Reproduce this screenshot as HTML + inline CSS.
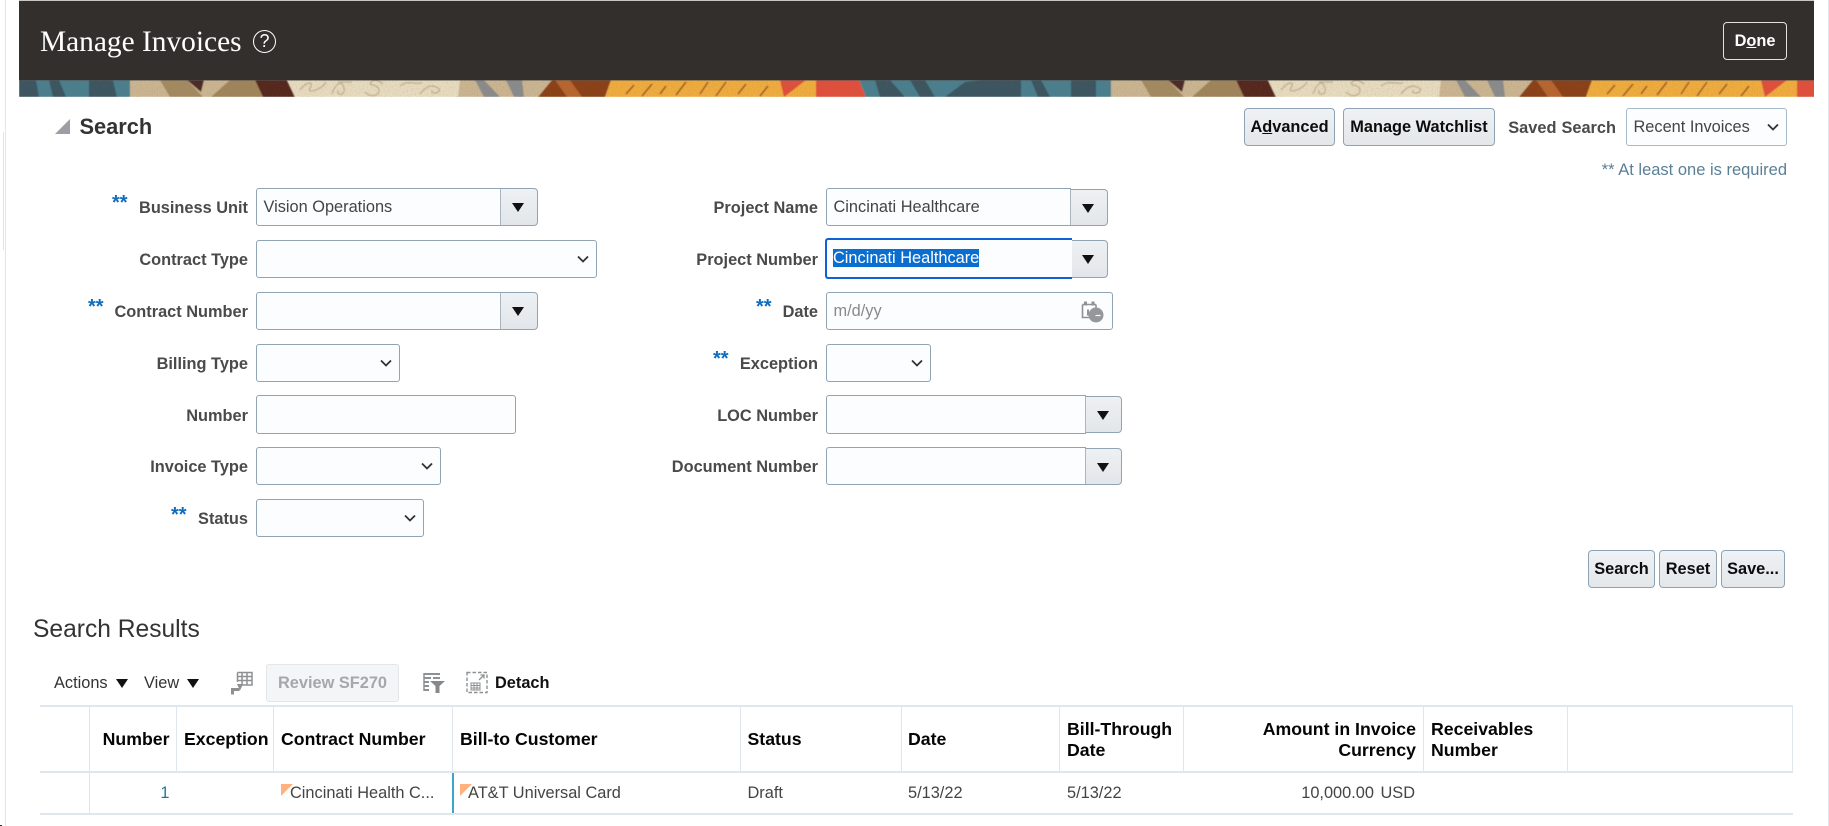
<!DOCTYPE html>
<html><head><meta charset="utf-8"><title>Manage Invoices</title>
<style>
html,body{margin:0;padding:0;background:#fff;width:1829px;height:826px;overflow:hidden}
body{position:relative;font-family:"Liberation Sans",sans-serif;font-size:16.35px;color:#444}
.a,.t,.l,.s,.i,.d,.b{position:absolute;box-sizing:border-box}
.t,.l,.s{white-space:nowrap;line-height:20px}
.l{font-weight:bold;color:#4a4a4a;text-align:right;margin-top:1px}
.s{font-weight:bold;color:#0f6cbd;font-size:20px}
.i{background:#fbfdfe;border:1px solid #90a4b4;border-radius:3px;padding-left:6.5px;line-height:37px;color:#444}
.i.c{border-radius:3px 0 0 3px}
.d{background:linear-gradient(#eef1f3,#e2e6ea);border:1px solid #90a4b4;border-left-color:#a9b6c0;border-radius:0 4px 4px 0}
.d:after{content:"";position:absolute;left:50%;top:50%;margin:-4px 0 0 -7px;border-left:6px solid transparent;border-right:6px solid transparent;border-top:9px solid #111}
.ch{position:absolute;top:50%;margin-top:-4px;width:12px;height:8px}
.b{background:linear-gradient(#eff2f4,#e3e7ea);border:1px solid #8ea4b6;border-radius:4px;font-weight:bold;color:#0c0c0c;text-align:center;line-height:37.5px}
.h{font-weight:bold;color:#050505;font-size:17.7px;line-height:21px}
.v{background:#dfe6ed;width:1px}
.hl{background:#dfe6ed;height:2px}
.tri{position:absolute;width:0;height:0;border-top:9px solid #111;border-left:6.5px solid transparent;border-right:6.5px solid transparent}
.o{position:absolute;width:0;height:0;border-top:12px solid #ffb27d;border-right:12px solid transparent}
</style></head><body>

<div class="a" style="left:5px;top:0;width:1px;height:826px;background:#dce7f2"></div>
<div class="a" style="left:3px;top:132px;width:1px;height:118px;background:#e2e2e2"></div>
<div class="a" style="left:1828px;top:0;width:1px;height:826px;background:#dfe8ef"></div>
<div class="a" style="left:0;top:825px;width:2px;height:1px;background:#333"></div>

<div class="a" style="left:19px;top:0;width:1795px;height:1px;background:#c9c7c4"></div>
<div class="a" style="left:19px;top:1px;width:1795px;height:79px;background:#332f2c"></div>
<svg class="a" style="left:19px;top:80px" width="1795" height="17" viewBox="19 0 1795 17">
<defs>
<filter id="n" x="0" y="0" width="100%" height="100%"><feTurbulence type="fractalNoise" baseFrequency="0.8" numOctaves="2" seed="4"/><feColorMatrix values="0 0 0 0 0.2  0 0 0 0 0.15  0 0 0 0 0.1  1.6 0 0 0 -0.75"/></filter>
<filter id="sf" x="0" y="0" width="100%" height="100%"><feGaussianBlur stdDeviation="0.5"/></filter>
<g id="p">
<rect x="130" y="0" width="985" height="17" fill="#cbb591"/>
<polygon points="160,0 187,0 203,17 170,17" fill="#a48a60"/>
<polygon points="187,0 204,0 201,12" fill="#4b2a28"/>
<polygon points="230,0 255,0 263,17 211,17" fill="#a0855a"/>
<polygon points="255,0 287,0 295,17 263,17" fill="#55271f"/>
<polygon points="287,0 460,0 458,17 295,17" fill="#e8dcc0"/>
<path d="M300,10c8,-10 14,-8 10,-2s12,2 16,-6M332,14c4,-12 10,-14 12,-6s-8,8 -6,2M365,12c6,6 14,4 14,-2s-12,-4 -8,-8 10,0 12,2M400,6c8,-6 12,-2 22,-3M420,14c6,-8 12,-10 18,-6s-8,8 -6,2M338,2l14,0" fill="none" stroke="#c6b593" stroke-width="1.5"/>
<polygon points="475,0 484,0 500,17 484,17" fill="#8a8b8c"/>
<polygon points="506,0 522,0 524,17 514,17" fill="#8a8b8c"/>
<polygon points="552,0 611,0 605,17 538,17" fill="#8b3f17"/>
<polygon points="555,0 570,0 582,17 567,17" fill="#b8652f"/>
<polygon points="611,0 780,0 784,17 605,17" fill="#f0ac3c"/>
<path d="M626,14l8,-9M642,16l10,-12M660,14l6,-8M676,15l10,-13M700,14l8,-12M716,16l10,-14M738,14l8,-10M760,16l8,-10" stroke="#9a5a24" stroke-width="1.5" fill="none"/>
<rect x="780" y="0" width="36" height="17" fill="#f0ac3c"/>
<polygon points="780,0 806,0 784,17" fill="#e0503a"/>
<polygon points="816,0 859,0 866,17 816,17" fill="#e0503a"/>
<polygon points="859,0 1111,0 1120,17 866,17" fill="#4a7f8e"/>
<polygon points="875,0 890,0 905,17 880,17" fill="#3a5560"/>
<polygon points="910,0 925,0 935,17 920,17" fill="#3a5560"/>
<polygon points="945,17 965,2 982,0 1021,0 1021,17" fill="#3a5560"/>
<polygon points="1031,0 1041,0 1050,17 1038,17" fill="#3a5560"/>
<polygon points="1071,0 1096,0 1096,17 1071,17" fill="#3a5560"/>
</g>
</defs>
<g filter="url(#sf)">
<rect x="19" y="0" width="120" height="17" fill="#4a7f8e"/>
<polygon points="19,0 36,0 39,17 19,17" fill="#3a5560"/>
<polygon points="49,0 59,0 66,17 53,17" fill="#3a5560"/>
<polygon points="89,0 113,0 117,17 89,17" fill="#3a5560"/>
<polygon points="113,0 130.5,0 139,17 117,17" fill="#4a7f8e"/>
<use href="#p"/>
<use href="#p" x="981"/>
</g>
<rect x="19" y="0" width="1795" height="17" filter="url(#n)" opacity=".35"/>
<rect x="19" y="0" width="1795" height="1" fill="#222" opacity=".4"/>
</svg>

<div class="t" style="left:40px;top:24px;font:29.4px/36px 'Liberation Serif',serif;color:#fff">Manage Invoices</div>
<div class="a" style="left:253px;top:30px;width:23px;height:23px;border:1.5px solid #fff;border-radius:50%;color:#fff;text-align:center;font-size:18px;line-height:20px">?</div>
<div class="b" style="left:1723px;top:22px;width:64px;height:38px;background:#332f2c;border-color:#e4e2df;color:#fff">D<u>o</u>ne</div>

<div class="a" style="left:55px;top:119px;width:0;height:0;border-bottom:15px solid #9b9fa3;border-left:15px solid transparent"></div>
<div class="t" style="left:79.5px;top:115px;font-size:21.8px;line-height:24px;font-weight:bold;color:#333">Search</div>

<div class="b" style="left:1244px;top:108px;width:91px;height:38px">A<u>d</u>vanced</div>
<div class="b" style="left:1343px;top:108px;width:152px;height:38px">Manage Watchlist</div>
<div class="l" style="right:213px;top:117px;word-spacing:0.5px">Saved Search</div>
<div class="i" style="left:1626px;top:108px;width:161px;height:38px;border-color:#a9bac7">Recent Invoices<svg class="ch" style="right:7px" viewBox="0 0 12 8"><path d="M1,1.5 6,6.5 11,1.5" fill="none" stroke="#333" stroke-width="1.8"/></svg></div>
<div class="t" style="right:42px;top:160px;color:#5b7f95;font-size:16.5px">** At least one is required</div>

<!-- left column -->
<div class="s" style="left:112px;top:193px">**</div>
<div class="l" style="right:1581px;top:197px">Business Unit</div>
<div class="i c" style="left:256px;top:188px;width:245px;height:38px">Vision Operations</div>
<div class="d" style="left:500px;top:188px;width:38px;height:38px"></div>

<div class="l" style="right:1581px;top:249px">Contract Type</div>
<div class="i" style="left:256px;top:240px;width:341px;height:38px"><svg class="ch" style="right:7px" viewBox="0 0 12 8"><path d="M1,1.5 6,6.5 11,1.5" fill="none" stroke="#333" stroke-width="1.8"/></svg></div>

<div class="s" style="left:88px;top:297px">**</div>
<div class="l" style="right:1581px;top:301px">Contract Number</div>
<div class="i c" style="left:256px;top:292px;width:245px;height:38px"></div>
<div class="d" style="left:500px;top:292px;width:38px;height:38px"></div>

<div class="l" style="right:1581px;top:353px">Billing Type</div>
<div class="i" style="left:256px;top:344px;width:144px;height:38px"><svg class="ch" style="right:7px" viewBox="0 0 12 8"><path d="M1,1.5 6,6.5 11,1.5" fill="none" stroke="#333" stroke-width="1.8"/></svg></div>

<div class="l" style="right:1581px;top:405px">Number</div>
<div class="i" style="left:256px;top:395px;width:260px;height:39px"></div>

<div class="l" style="right:1581px;top:456px">Invoice Type</div>
<div class="i" style="left:256px;top:447px;width:185px;height:38px"><svg class="ch" style="right:7px" viewBox="0 0 12 8"><path d="M1,1.5 6,6.5 11,1.5" fill="none" stroke="#333" stroke-width="1.8"/></svg></div>

<div class="s" style="left:171px;top:505px">**</div>
<div class="l" style="right:1581px;top:508px">Status</div>
<div class="i" style="left:256px;top:499px;width:168px;height:38px"><svg class="ch" style="right:7px" viewBox="0 0 12 8"><path d="M1,1.5 6,6.5 11,1.5" fill="none" stroke="#333" stroke-width="1.8"/></svg></div>

<!-- right column -->
<div class="l" style="right:1011px;top:197px">Project Name</div>
<div class="i c" style="left:826px;top:188px;width:245px;height:38px">Cincinati Healthcare</div>
<div class="d" style="left:1070px;top:189px;width:38px;height:37px"></div>

<div class="l" style="right:1011px;top:249px">Project Number</div>
<div class="d" style="left:1070px;top:240px;width:38px;height:38px"></div>
<div class="i c" style="left:825px;top:238px;width:247px;height:41px;border:2.5px solid #0f62d6;border-radius:3px 0 0 3px;background:#fbfdfe;padding-left:6px;line-height:36px;border-right:0"><span style="background:#0a6ed1;color:#fff;display:inline-block;line-height:18px">Cincinati Healthcare</span></div>

<div class="s" style="left:756px;top:297px">**</div>
<div class="l" style="right:1011px;top:301px">Date</div>
<div class="i" style="left:826px;top:292px;width:287px;height:38px;color:#8a8a8a">m/d/yy</div>
<svg class="a" style="left:1081px;top:300px" width="23" height="23" viewBox="0 0 23 23"><path d="M1.5,4.5H15M1.5,4.5V17.5H8M15,4.5V8" fill="none" stroke="#8e9295" stroke-width="1.6"/><path d="M3,1.5h3v4H3zM10.5,1.5h3v4h-3z" fill="#8e9295"/><path d="M6,9.5h2v6H6z" fill="#8e9295"/><circle cx="15" cy="15" r="7.5" fill="#94989b"/><path d="M14.5,15.5h5" stroke="#fff" stroke-width="1.2"/></svg>

<div class="s" style="left:713px;top:349px">**</div>
<div class="l" style="right:1011px;top:353px">Exception</div>
<div class="i" style="left:826px;top:344px;width:105px;height:38px"><svg class="ch" style="right:7px" viewBox="0 0 12 8"><path d="M1,1.5 6,6.5 11,1.5" fill="none" stroke="#333" stroke-width="1.8"/></svg></div>

<div class="l" style="right:1011px;top:405px">LOC Number</div>
<div class="i c" style="left:826px;top:395px;width:260px;height:39px"></div>
<div class="d" style="left:1085px;top:396px;width:37px;height:37px"></div>

<div class="l" style="right:1011px;top:456px">Document Number</div>
<div class="i c" style="left:826px;top:447px;width:260px;height:38px"></div>
<div class="d" style="left:1085px;top:448px;width:37px;height:37px"></div>

<div class="b" style="left:1588px;top:550px;width:67px;height:38px">Search</div>
<div class="b" style="left:1659px;top:550px;width:58px;height:38px">Reset</div>
<div class="b" style="left:1721px;top:550px;width:64px;height:38px">Save...</div>

<div class="t" style="left:33px;top:616px;font-size:24.6px;line-height:28px;color:#333">Search Results</div>

<!-- toolbar -->
<div class="t" style="left:54px;top:673px;color:#333">Actions</div>
<div class="tri" style="left:115.5px;top:679px"></div>
<div class="t" style="left:144px;top:673px;color:#333">View</div>
<div class="tri" style="left:187px;top:679px"></div>
<svg class="a" style="left:231px;top:671px" width="22" height="24" viewBox="0 0 22 24"><path d="M6.5,1.5H21V14H11M6.5,1.5V11M6.5,5.5H21M6.5,9.5H21M11,1.5V14M16,1.5V14" fill="none" stroke="#8d9193" stroke-width="1.5"/><path d="M1.5,23.5V18.5H8.5" fill="none" stroke="#8d9193" stroke-width="3"/><path d="M6,13 12,13 9,19.5z" fill="#8d9193"/></svg>
<div class="a" style="left:266px;top:664px;width:133px;height:38px;background:#f3f5f7;border:1px solid #e3e7ea;border-radius:3px;color:#a5a8ab;font-weight:bold;text-align:center;line-height:36px">Review SF270</div>
<svg class="a" style="left:423px;top:672px" width="23" height="21" viewBox="0 0 23 21"><path d="M1,2H17M1,6H8M10,6H17M1,10H6M1,14H6M1,18H6" fill="none" stroke="#8d9193" stroke-width="2"/><path d="M1,1V19" stroke="#8d9193" stroke-width="1.5"/><path d="M7,9H22L16.5,14V21H12.5V14z" fill="#85898b"/></svg>
<svg class="a" style="left:466px;top:671px" width="22" height="23" viewBox="0 0 22 23"><rect x="1" y="1.5" width="20" height="20" fill="none" stroke="#8d9193" stroke-width="1.4" stroke-dasharray="3.5 2"/><path d="M5,12h9v7H5zM5,14.5h9M5,17h9M8,12v7M11,12v7" fill="none" stroke="#8d9193" stroke-width="1"/><path d="M13,9 18,4M14.5,4H18V7.5" fill="none" stroke="#8d9193" stroke-width="1.3"/></svg>
<div class="t" style="left:495px;top:673px;font-weight:bold;color:#111">Detach</div>

<!-- table -->
<div class="a hl" style="left:40px;top:705px;width:1753px"></div>
<div class="a hl" style="left:40px;top:771px;width:1753px"></div>
<div class="a hl" style="left:40px;top:813px;width:1753px"></div>
<div class="a v" style="left:89px;top:706px;height:108px"></div>
<div class="a v" style="left:176px;top:706px;height:66px"></div>
<div class="a v" style="left:273px;top:706px;height:66px"></div>
<div class="a v" style="left:452px;top:706px;height:66px"></div>
<div class="a v" style="left:740px;top:706px;height:66px"></div>
<div class="a v" style="left:901px;top:706px;height:66px"></div>
<div class="a v" style="left:1059px;top:706px;height:66px"></div>
<div class="a v" style="left:1183px;top:706px;height:66px"></div>
<div class="a v" style="left:1423px;top:706px;height:66px"></div>
<div class="a v" style="left:1567px;top:706px;height:66px"></div>
<div class="a v" style="left:1792px;top:706px;height:66px"></div>
<div class="a" style="left:452px;top:773px;width:1.5px;height:40px;background:#3aa6c8"></div>

<div class="t h" style="right:1659.5px;top:729px">Number</div>
<div class="t h" style="left:184px;top:729px">Exception</div>
<div class="t h" style="left:281px;top:729px">Contract Number</div>
<div class="t h" style="left:460px;top:729px">Bill-to Customer</div>
<div class="t h" style="left:747.5px;top:729px">Status</div>
<div class="t h" style="left:908px;top:729px">Date</div>
<div class="t h" style="left:1067px;top:719px">Bill-Through<br>Date</div>
<div class="t h" style="right:413px;top:719px;text-align:right">Amount in Invoice<br>Currency</div>
<div class="t h" style="left:1431px;top:719px">Receivables<br>Number</div>

<div class="t" style="right:1659.5px;top:783px;color:#1f7a99">1</div>
<div class="o" style="left:281px;top:784px"></div>
<div class="t" style="left:290px;top:783px">Cincinati Health C...</div>
<div class="o" style="left:460px;top:784px"></div>
<div class="t" style="left:468px;top:783px">AT&amp;T Universal Card</div>
<div class="t" style="left:747.5px;top:783px">Draft</div>
<div class="t" style="left:908px;top:783px">5/13/22</div>
<div class="t" style="left:1067px;top:783px">5/13/22</div>
<div class="t" style="right:414px;top:783px;word-spacing:2px">10,000.00 USD</div>

</body></html>
